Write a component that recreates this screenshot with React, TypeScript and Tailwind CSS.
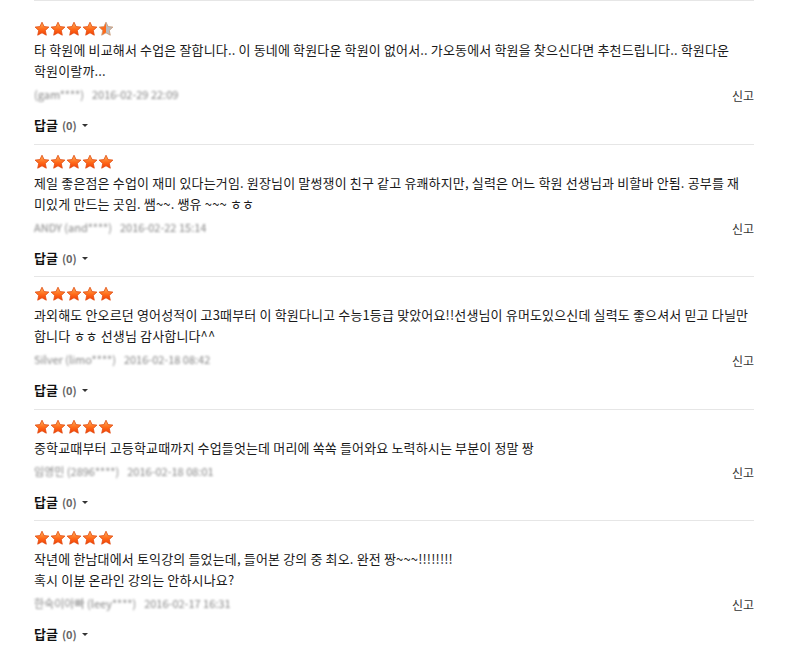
import React from "react";

type Review = {
  rating: number;
  body: string;
  author: string;
  date: string;
  replies: number;
};

const reviews: Review[] = [
  {
    rating: 4.5,
    body: "타 학원에 비교해서 수업은 잘합니다.. 이 동네에 학원다운 학원이 없어서.. 가오동에서 학원을 찾으신다면 추천드립니다.. 학원다운\n학원이랄까...",
    author: "(gam****)",
    date: "2016-02-29 22:09",
    replies: 0,
  },
  {
    rating: 5,
    body: "제일 좋은점은 수업이 재미 있다는거임. 원장님이 말썽쟁이 친구 같고 유쾌하지만, 실력은 어느 학원 선생님과 비할바 안됨. 공부를 재\n미있게 만드는 곳임. 쌤~~. 쌩유 ~~~ ㅎㅎ",
    author: "ANDY (and****)",
    date: "2016-02-22 15:14",
    replies: 0,
  },
  {
    rating: 5,
    body: "과외해도 안오르던 영어성적이 고3때부터 이 학원다니고 수능1등급 맞았어요!!선생님이 유머도있으신데 실력도 좋으셔서 믿고 다닐만\n합니다 ㅎㅎ 선생님 감사합니다^^",
    author: "Silver (limo****)",
    date: "2016-02-18 08:42",
    replies: 0,
  },
  {
    rating: 5,
    body: "중학교때부터 고등학교때까지 수업들엇는데 머리에 쏙쏙 들어와요 노력하시는 부분이 정말 짱",
    author: "임영민 (2896****)",
    date: "2016-02-18 08:01",
    replies: 0,
  },
  {
    rating: 5,
    body: "작년에 한남대에서 토익강의 들었는데, 들어본 강의 중 최오. 완전 짱~~~!!!!!!!!\n혹시 이분 온라인 강의는 안하시나요?",
    author: "한숙이아빠 (leey****)",
    date: "2016-02-17 16:31",
    replies: 0,
  },
];

const STAR =
  "M8 1.2 L10.1 5.6 L14.9 6.1 L11.3 9.4 L12.3 14.2 L8 11.8 L3.7 14.2 L4.7 9.4 L1.1 6.1 L5.9 5.6 Z";

function Star({ fill, id }: { fill: "full" | "half"; id: string }) {
  return (
    <svg width="16" height="16" viewBox="0 0 16 16" className="block">
      <defs>
        <linearGradient id={`g-${id}`} x1="0" y1="0" x2="0" y2="1">
          <stop offset="0" stopColor="#ffb35c" />
          <stop offset="0.55" stopColor="#ff6a1a" />
          <stop offset="1" stopColor="#f23c00" />
        </linearGradient>
        <linearGradient id={`h-${id}`} x1="0" y1="0" x2="1" y2="0">
          <stop offset="0.5" stopColor="#ff6a1a" />
          <stop offset="0.5" stopColor="#b8bcc2" />
        </linearGradient>
      </defs>
      <path
        d={STAR}
        fill={fill === "full" ? `url(#g-${id})` : `url(#h-${id})`}
        stroke={fill === "full" ? "#e04a10" : "#c9966f"}
        strokeWidth="0.8"
        strokeLinejoin="round"
      />
    </svg>
  );
}

function Stars({ rating, idx }: { rating: number; idx: number }) {
  return (
    <div className="flex h-4 items-center">
      {[0, 1, 2, 3, 4].map((i) => (
        <Star key={i} id={`${idx}-${i}`} fill={rating - i >= 1 ? "full" : "half"} />
      ))}
    </div>
  );
}

function ReviewItem({ review, idx }: { review: Review; idx: number }) {
  return (
    <div className="border-b border-[#e6e6e6] pt-[9px] pb-[10px]">
      <Stars rating={review.rating} idx={idx} />
      <p className="mt-[2px] whitespace-pre-line text-[13px] leading-[21px] tracking-[0.15px] text-[#1a1a1a]">
        {review.body}
      </p>
      <div className="mt-[5px] flex items-start justify-between">
        <div className="pt-[1px] text-[11px] leading-[14px] text-[#858585] blur-[0.8px]">
          {review.author}
          <span className="ml-2">{review.date}</span>
        </div>
        <button className="mt-[3px] text-[12px] leading-[14px] text-[#333]">신고</button>
      </div>
      <div className="mt-[14px] flex items-center">
        <span className="text-[13px] font-bold leading-[16px] text-[#111]">답글</span>
        <span className="ml-[4px] text-[11px] font-bold text-[#666]">({review.replies})</span>
        <span className="ml-[5px] mt-[1px] h-0 w-0 border-x-[3px] border-t-[3px] border-x-transparent border-t-[#333]" />
      </div>
    </div>
  );
}

export default function App() {
  return (
    <div
      className="min-h-[652px] bg-white"
      style={{ fontFamily: '"Noto Sans CJK KR", "Noto Sans", sans-serif' }}
    >
      <div className="ml-[34px] w-[720px] border-t border-[#e6e6e6] pt-[11px]">
        {reviews.map((r, i) => (
          <ReviewItem key={i} review={r} idx={i} />
        ))}
      </div>
    </div>
  );
}
